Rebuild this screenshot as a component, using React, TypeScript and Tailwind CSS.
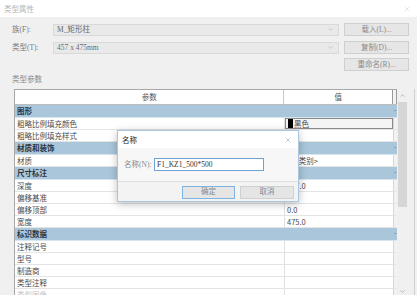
import { X, ChevronDown, ChevronUp } from 'lucide-react';

type Row = { group?: string; name?: string; value?: string; swatch?: boolean; faded?: boolean };

const rows: Row[] = [
  { group: '图形' },
  { name: '粗略比例填充颜色', value: '黑色', swatch: true },
  { name: '粗略比例填充样式' },
  { group: '材质和装饰' },
  { name: '材质', value: '<按类别>' },
  { group: '尺寸标注' },
  { name: '深度', value: '457.0' },
  { name: '偏移基准', value: '0.0' },
  { name: '偏移顶部', value: '0.0' },
  { name: '宽度', value: '475.0' },
  { group: '标识数据' },
  { name: '注释记号' },
  { name: '型号' },
  { name: '制造商' },
  { name: '类型注释' },
  { name: '类型图像', faded: true },
];

const labelFont = { fontFamily: '"Liberation Serif", "Noto Sans CJK SC", serif' };

function Select({ text }: { text: string }) {
  return (
    <div className="w-[286px] h-[12px] bg-[#e9e9e9] border border-[#d9d9d9] flex items-center justify-between pl-[3px] pr-[4px]">
      <span className="text-[7.5px] text-[#6a6a6a] leading-none" style={labelFont}>
        {text}
      </span>
      <ChevronDown size={7} strokeWidth={1.5} className="text-[#9a9a9a]" />
    </div>
  );
}

function Btn({ text }: { text: string }) {
  return (
    <div
      className="w-[65px] h-[13px] bg-[#e6e6e6] border border-[#cfcfcf] flex items-center justify-center text-[7.5px] text-[#8a8a8a] leading-none"
      style={labelFont}
    >
      {text}
    </div>
  );
}

function TableRow({ r }: { r: Row }) {
  if (r.group) {
    return (
      <div className="h-[13px] w-[383px] bg-[#aac6da] flex items-center justify-between pl-[2px] pr-[2px] border-b border-[#d8e4ee]">
        <span className="text-[7.5px] font-bold text-[#2a3440] leading-none">{r.group}</span>
        <span className="text-[5px] text-[#4a5a6a] leading-none">ˆ</span>
      </div>
    );
  }
  return (
    <div className="h-[12px] w-[383px] flex bg-white border-b border-[#e4e4e4]">
      <div
        className={`w-[270px] flex items-center pl-[2px] text-[7.5px] leading-none border-r border-[#e0e0e0] ${
          r.faded ? 'text-[#c4c4c4]' : 'text-[#4a4a4a]'
        }`}
      >
        {r.name}
      </div>
      <div
        className={`w-[108px] flex items-center pl-[2px] text-[7.5px] text-[#4a4a4a] leading-none ${
          r.swatch ? 'border border-[#8a8a8a] bg-[#f4f4f4]' : ''
        }`}
      >
        {r.swatch && <span className="w-[5px] h-[9px] bg-black mr-[1px]" />}
        {r.value}
      </div>
      <div className="w-[5px] bg-[#f2f2f2] border-x border-[#d6d6d6]" />
    </div>
  );
}

export default function App() {
  return (
    <div
      className="w-[417px] h-[295px] overflow-hidden relative bg-[#f0f0f0] select-none"
      style={{ fontFamily: '"Noto Sans CJK SC", "Noto Sans", sans-serif' }}
    >
      {/* title bar */}
      <div className="h-[17px] bg-white flex items-center justify-between pl-[4px] pr-[6px]">
        <span className="text-[7.5px] text-[#b4b4b4] leading-none">类型属性</span>
        <X size={8} strokeWidth={1} className="text-[#b8b8b8]" />
      </div>

      <div className="pl-[12px] pt-[6px]">
        <div className="flex items-center h-[13px]">
          <span className="w-[41px] text-[7.5px] text-[#7a7a7a] leading-none" style={labelFont}>
            族(F):
          </span>
          <Select text="M_矩形柱" />
          <div className="ml-[5px]">
            <Btn text="载入(L)..." />
          </div>
        </div>
        <div className="flex items-center h-[13px] mt-[5px]">
          <span className="w-[41px] text-[7.5px] text-[#7a7a7a] leading-none" style={labelFont}>
            类型(T):
          </span>
          <Select text="457 x 475mm" />
          <div className="ml-[5px]">
            <Btn text="复制(D)..." />
          </div>
        </div>
        <div className="flex justify-end w-[397px] mt-[4px]">
          <Btn text="重命名(R)..." />
        </div>
        <div className="mt-[3px] h-[12px] flex items-center text-[7.5px] text-[#8a8a8a] leading-none" style={labelFont}>
          类型参数
        </div>
      </div>

      {/* parameter table */}
      <div className="ml-[14px] mt-[3px] flex">
        <div className="w-[383px] border-l border-t border-[#a8a8a8] bg-white">
          <div className="h-[15px] flex border-b border-[#bdbdbd]">
            <div className="w-[270px] flex items-center justify-center text-[7.5px] text-[#555] leading-none border-r border-[#c8c8c8]">
              参数
            </div>
            <div className="w-[108px] flex items-center justify-center text-[7.5px] text-[#555] leading-none">
              值
            </div>
            <div className="w-[5px] bg-[#f2f2f2] border-x border-[#9a9a9a]" />
          </div>
          {rows.map((r, i) => (
            <TableRow key={i} r={r} />
          ))}
        </div>
        {/* scrollbar */}
        <div className="w-[11px] h-[208px] bg-[#f0f0f0] flex flex-col items-center">
          <div className="h-[13px] flex items-center">
            <ChevronUp size={7} strokeWidth={1.5} className="text-[#707070]" />
          </div>
          <div className="w-[9px] h-[105px] bg-[#d6d6d6]" />
          <div className="flex-1" />
          <div className="h-[12px] flex items-center">
            <ChevronDown size={7} strokeWidth={1.5} className="text-[#707070]" />
          </div>
        </div>
        <div className="w-[7px] h-[208px] border-r border-[#d0d0d0]" />
      </div>

      {/* 名称 dialog */}
      <div className="absolute left-[117px] top-[130px] w-[182px] h-[72px] border border-[#a9c6de] bg-[#f3f3f3] shadow-[0_2px_8px_rgba(0,0,0,0.25)] flex flex-col">
        <div className="h-[17px] bg-white flex items-center justify-between pl-[4px] pr-[6px]">
          <span className="text-[7.5px] text-[#222] leading-none">名称</span>
          <X size={8} strokeWidth={1} className="text-[#666]" />
        </div>
        <div className="h-[33px] flex items-center pl-[6px] bg-[#f7f7f7]">
          <span className="w-[30px] text-[7.5px] text-[#8a8a8a] leading-none" style={labelFont}>
            名称(N):
          </span>
          <div className="w-[110px] h-[13px] bg-white border border-[#6fa3d6] flex items-center pl-[2px] text-[7.5px] text-[#333] leading-none" style={labelFont}>
            F1_KZ1_500*500
          </div>
        </div>
        <div className="flex-1 border-t border-[#dedede] flex items-center justify-end gap-[5px] pr-[4px] pt-[1px]">
          <div className="w-[53px] h-[13px] border border-[#7eb4e2] bg-[#e5e5e5] flex items-center justify-center text-[7.5px] text-[#8a8a8a] leading-none" style={labelFont}>
            确定
          </div>
          <div className="w-[54px] h-[13px] border border-[#d0d0d0] bg-[#e5e5e5] flex items-center justify-center text-[7.5px] text-[#8a8a8a] leading-none" style={labelFont}>
            取消
          </div>
        </div>
      </div>
    </div>
  );
}
